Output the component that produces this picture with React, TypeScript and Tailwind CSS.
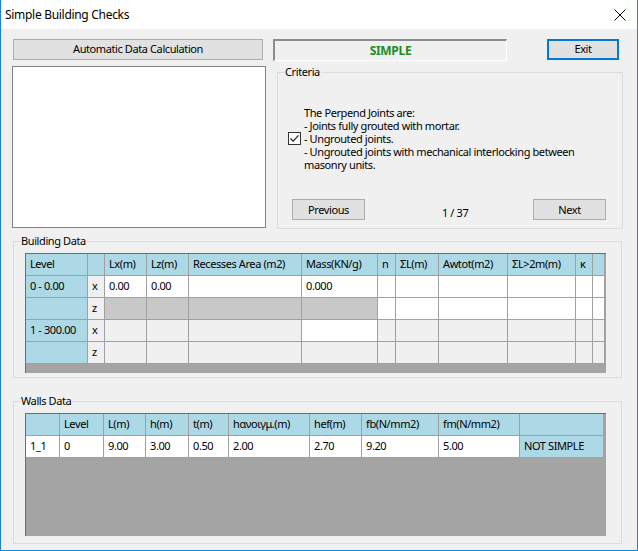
import React from "react";

const blue = "bg-[#add8e6]";
const light = "bg-[#f0f0f0]";
const silver = "bg-[#c8c8c8]";
const white = "bg-white";

type Cell = { t?: string; bg: string };

// Building Data grid: column widths in px, rows of cells
const bCols = "grid-cols-[62px_17px_42px_42px_113px_76px_18px_43px_69px_68px_17px_12px]";
const bHead = ["Level", "", "Lx(m)", "Lz(m)", "Recesses Area (m2)", "Mass(KN/g)", "n", "ΣL(m)", "Awtot(m2)", "ΣL>2m(m)", "κ", ""];

const bRows: Cell[][] = [
  [
    { t: "0 - 0.00", bg: blue },
    { t: "x", bg: light },
    { t: "0.00", bg: white },
    { t: "0.00", bg: white },
    { bg: white },
    { t: "0.000", bg: white },
    { bg: white }, { bg: white }, { bg: white }, { bg: white }, { bg: white }, { bg: white },
  ],
  [
    { bg: blue },
    { t: "z", bg: light },
    { bg: silver }, { bg: silver }, { bg: silver }, { bg: silver },
    { bg: white }, { bg: white }, { bg: white }, { bg: white }, { bg: white }, { bg: white },
  ],
  [
    { t: "1 - 300.00", bg: blue },
    { t: "x", bg: light },
    { bg: light }, { bg: light }, { bg: light },
    { bg: white },
    { bg: light }, { bg: light }, { bg: light }, { bg: light }, { bg: light }, { bg: light },
  ],
  [
    { bg: blue },
    { t: "z", bg: light },
    { bg: light }, { bg: light }, { bg: light }, { bg: light },
    { bg: light }, { bg: light }, { bg: light }, { bg: light }, { bg: light }, { bg: light },
  ],
];

const wCols = "grid-cols-[34px_44px_42px_43px_40px_81px_52px_77px_81px_84px]";
const wHead = ["", "Level", "L(m)", "h(m)", "t(m)", "hανοιγμ.(m)", "hef(m)", "fb(N/mm2)", "fm(N/mm2)", ""];
const wRow = ["1_1", "0", "9.00", "3.00", "0.50", "2.00", "2.70", "9.20", "5.00"];

function GridCell({ t, bg }: Cell) {
  return (
    <div className={`${bg} h-[22px] border-r border-b border-[#a0a0a0] pl-[4px] flex items-center whitespace-nowrap overflow-hidden`}>
      {t}
    </div>
  );
}

function WinButton({ label, className = "" }: { label: string; className?: string }) {
  return (
    <button
      type="button"
      className={`h-[21px] bg-[#e1e1e1] border border-[#adadad] flex items-center justify-center text-black ${className}`}
    >
      {label}
    </button>
  );
}

function Group({ label, className = "", children }: { label: string; className?: string; children: React.ReactNode }) {
  return (
    <div className={`relative border border-[#dcdcdc] ${className}`}>
      <span className="absolute left-[6px] top-[-9px] bg-[#f0f0f0] px-[1px] leading-[16px]">{label}</span>
      {children}
    </div>
  );
}

export default function App() {
  return (
    <div className="w-[638px] h-[551px] bg-[#f0f0f0] border-x border-b border-[#1883d7] flex flex-col text-[11px] tracking-[-0.4px] text-black font-['Noto_Sans',sans-serif] overflow-hidden">
      {/* title bar */}
      <div className="h-[29px] shrink-0 bg-white flex items-center justify-between pl-[4px] pr-[11px]">
        <span className="text-[12px] tracking-[-0.3px]">Simple Building Checks</span>
        <svg width="12" height="12" viewBox="0 0 12 12" className="mt-[1px]">
          <path d="M0.5 0.5 L11.5 11.5 M11.5 0.5 L0.5 11.5" stroke="#000" strokeWidth="1" />
        </svg>
      </div>

      {/* top area */}
      <div className="flex pl-[11px]">
        <div className="flex flex-col w-[254px]">
          <WinButton label="Automatic Data Calculation" className="mt-[10px] ml-[1px] w-[250px]" />
          <div className="mt-[6px] h-[162px] bg-white border border-[#828282]" />
        </div>

        <div className="flex flex-col ml-[7px]">
          <div className="flex mt-[10px]">
            <div className="w-[234px] h-[22px] border-t-2 border-l-2 border-[#8c8c8c] border-b border-r border-b-white border-r-white bg-[#f0f0f0] flex items-center justify-center font-bold text-[12px] tracking-[-0.3px] text-[#228b22]">
              SIMPLE
            </div>
            <button
              type="button"
              className="ml-[40px] w-[72px] h-[21px] bg-[#e1e1e1] border-2 border-[#0078d7] flex items-center justify-center"
            >
              Exit
            </button>
          </div>

          <Group label="Criteria" className="mt-[11px] ml-[4px] w-[346px] h-[157px] flex flex-col">
            <div className="flex items-center pl-[10px] pt-[33px]">
              <div className="w-[13px] h-[13px] border border-[#333] bg-white flex items-center justify-center shrink-0">
                <svg width="11" height="11" viewBox="0 0 11 11">
                  <path d="M1.5 5.5 L4.2 8.2 L9.5 2.3" fill="none" stroke="#222" strokeWidth="1.2" />
                </svg>
              </div>
              <div className="ml-[3px] leading-[13px] whitespace-nowrap">
                <div>The Perpend Joints are:</div>
                <div>- Joints fully grouted with mortar.</div>
                <div>- Ungrouted joints.</div>
                <div>- Ungrouted joints with mechanical interlocking between</div>
                <div>masonry units.</div>
              </div>
            </div>
            <div className="mt-auto mb-[7px] flex items-center pl-[14px] pr-[16px]">
              <WinButton label="Previous" className="w-[73px]" />
              <span className="ml-[77px] mt-[6px]">1 / 37</span>
              <WinButton label="Next" className="ml-auto w-[73px]" />
            </div>
          </Group>
        </div>
      </div>

      {/* building data */}
      <Group label="Building Data" className="mt-[12px] ml-[12px] w-[609px] h-[137px] pl-[11px] pt-[11px]">
        <div className="w-[581px] border-t border-l border-[#6d6d6d] bg-[#a4a4a4] h-[120px]">
          <div className={`grid ${bCols}`}>
            {bHead.map((h, i) => (
              <GridCell key={i} t={h} bg={blue} />
            ))}
            {bRows.map((r, ri) => r.map((c, ci) => <GridCell key={`${ri}-${ci}`} {...c} />))}
          </div>
        </div>
      </Group>

      {/* walls data */}
      <Group label="Walls Data" className="mt-[23px] ml-[12px] w-[609px] h-[143px] pl-[11px] pt-[11px]">
        <div className="w-[581px] border-t border-l border-[#6d6d6d] bg-[#a4a4a4] h-[123px]">
          <div className={`grid ${wCols}`}>
            {wHead.map((h, i) => (
              <GridCell key={i} t={h} bg={blue} />
            ))}
            {wRow.map((v, i) => (
              <GridCell key={`w${i}`} t={v} bg={white} />
            ))}
            <GridCell t="NOT SIMPLE" bg={blue} />
          </div>
        </div>
      </Group>
    </div>
  );
}
